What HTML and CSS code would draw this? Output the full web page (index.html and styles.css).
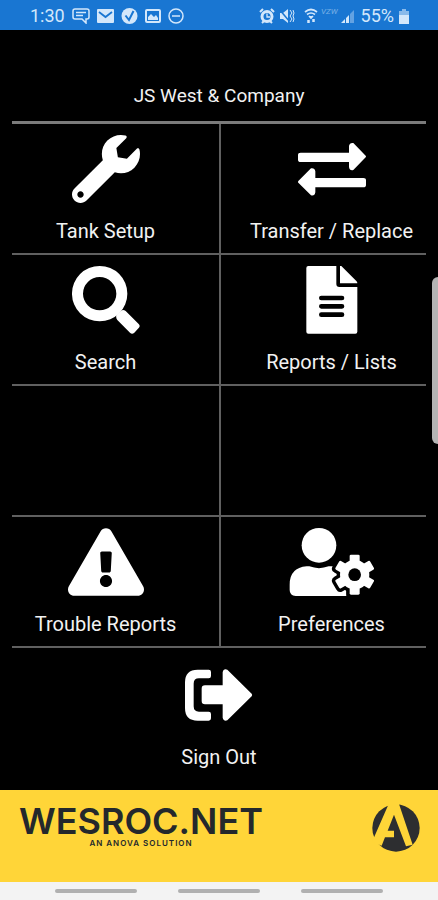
FILE: index.html
```
<!DOCTYPE html>
<html lang="en">
<head>
    <meta charset="UTF-8">
    <meta name="viewport" content="width=device-width, initial-scale=1">
    <title>Wesroc.net</title>
    <link rel="stylesheet" href="styles.css">
</head>
<body>
<div class="status-bar">
    <div class="status-left">
        <span>1:30</span>
        <svg width="18" height="16" viewBox="0 0 18 16" fill="none" stroke="currentColor" stroke-width="1.5"><path d="M3 1h12q2 0 2 2v6q0 2-2 2h-1v4l-4-4H3q-2 0-2-2V3q0-2 2-2zM4 4.500h10M4 7.500h7"/></svg>
        <svg width="17" height="16" viewBox="0 0 17 16"><rect y="1" width="17" height="14" rx="1" fill="currentColor"/><path d="M2 4l6.500 5L15 4" fill="none" stroke="#1976d2" stroke-width="1.800"/></svg>
        <svg width="17" height="16" viewBox="0 0 17 16"><circle cx="8.500" cy="8" r="8" fill="currentColor"/><path d="M4.500 7.500l3.500 4.500 4.500-9" fill="none" stroke="#1976d2" stroke-width="2"/></svg>
        <svg width="16" height="16" viewBox="0 0 16 16"><rect x="1" y="2" width="14" height="12" rx="1" fill="none" stroke="currentColor" stroke-width="2"/><path d="M3 12V9l3-3 3 3 2-2 2 3v2z" fill="currentColor"/></svg>
        <svg width="16" height="16" viewBox="0 0 16 16" fill="none" stroke="currentColor" stroke-width="1.500"><circle cx="8" cy="8" r="7"/><path d="M4 8h8"/></svg>
    </div>
    <div class="status-right">
        <svg width="16" height="16" viewBox="0 0 16 16" fill="none" stroke="currentColor"><circle cx="8" cy="8.500" r="5" stroke-width="3"/><path d="M1 4l3-3M15 4l-3-3M3 15l2-2M13 15l-2-2" stroke-width="2"/><path d="M8 5.500V9h3" stroke-width="1.300"/></svg>
        <svg width="17" height="16" viewBox="0 0 17 16"><path d="M2 5h3l5-4v14l-5-4H2z" fill="currentColor"/><path d="M1 1l11 13" stroke="#1976d2" stroke-width="1.500"/><path d="M12 2l2 3-2 3 2 3-2 3M15 2l1 3-1 3 1 3-1 3" fill="none" stroke="currentColor"/></svg>
        <svg class="wifi" width="14" height="16" viewBox="0 0 14 16" fill="none" stroke="currentColor" stroke-width="1.700"><path d="M1 4q6-5 12 0M3 6.500q4-3 8 0"/><path d="M5 8l2 2 2-2" fill="currentColor"/><path d="M4.500 15v-3M9.500 11v3" stroke-width="2.500"/></svg>
        <span class="carrier">VZW</span>
        <svg width="13" height="14" viewBox="0 0 13 14" fill="currentColor"><path d="M0 14l4-4v4zM5 14V9l3-3v8z"/><path d="M9 14V5l4-4v13z" opacity=".4"/></svg>
        <span class="percent">55%</span>
        <svg width="10" height="15" viewBox="0 0 10 15" fill="currentColor"><path d="M3 0h4v2h3v4H0V2h3z" opacity=".6"/><path d="M0 6h10v9H0z"/></svg>
    </div>
</div>

<main class="main">
    <h1 class="company">JS West &amp; Company</h1>
    <nav class="menu">
        <a class="item" href="#">
            <svg class="icon" width="68" height="68" viewBox="0 0 512 512"><path d="M507.730 109.100c-2.240-9.030-13.540-12.090-20.120-5.510l-74.360 74.360-67.880-11.310-11.310-67.880 74.360-74.360c6.620-6.620 3.430-17.900-5.660-20.160-47.380-11.740-99.550.910-136.580 37.930-39.640 39.640-50.550 97.100-34.050 147.200L18.740 402.760c-24.990 24.990-24.990 65.510 0 90.500 24.990 24.990 65.510 24.990 90.500 0l213.210-213.210c50.120 16.710 107.470 5.680 147.370-34.220 37.070-37.070 49.700-89.320 37.910-136.730zM64 472c-13.250 0-24-10.750-24-24 0-13.260 10.750-24 24-24s24 10.740 24 24c0 13.250-10.750 24-24 24z"/></svg>
            <span>Tank Setup</span>
        </a>
        <a class="item" href="#">
            <svg class="icon" width="68" height="68" viewBox="0 0 204 204"><path d="M8 53h145V33q2-11 13-9l37 38q2 3 0 5l-37 38q-11 3-13-9V81H8q-8 0-8-7V60q0-7 8-7zM196 129H52v-20q-2-11-13-9L1 138q-2 3 0 5l38 38q11 3 13-9v-15h144q8 0 8-7v-14q0-7-8-7z"/></svg>
            <span>Transfer / Replace</span>
        </a>
        <a class="item" href="#">
            <svg class="icon" width="68" height="68" viewBox="0 0 204 204"><path fill-rule="evenodd" d="M83 0a83 83 0 1 1 0 166a83 83 0 1 1 0-166zM83 33a50 50 0 1 0 0 100a50 50 0 1 0 0-100z"/><path d="M133 147l14-13q7-4 14 1l39 39q6 6 0 12l-13 14q-7 6-13 0l-38-38q-5-5-3-15z"/></svg>
            <span>Search</span>
        </a>
        <a class="item" href="#">
            <svg class="icon" width="52" height="68" viewBox="0 0 156 204"><path fill-rule="evenodd" d="M7 0h84v54q0 9 9 9h54v134q0 6-6 6H7q-6 0-6-6V6q0-6 6-6zM46 89q-7 0-7 7t7 7h62q7 0 7-7t-7-7zM46 114q-7 0-7 7t7 7h62q7 0 7-7t-7-7zM46 139q-7 0-7 7t7 7h62q7 0 7-7t-7-7z"/><path d="M102 0h4l45 45q3 3 3 7h-52z"/></svg>
            <span>Reports / Lists</span>
        </a>
        <div class="item"></div>
        <div class="item"></div>
        <a class="item" href="#">
            <svg class="icon" width="76" height="68" viewBox="0 0 576 512"><path d="M569.517 440.013C587.975 472.007 564.806 512 527.940 512H48.054c-36.937 0-59.999-40.055-41.577-71.987L246.423 23.985c18.467-32.009 64.720-31.951 83.154 0l239.940 416.028zM288 354c-25.405 0-46 20.595-46 46s20.595 46 46 46 46-20.595 46-46-20.595-46-46-46zm-43.673-165.346l7.418 136c.347 6.364 5.609 11.346 11.982 11.346h48.546c6.373 0 11.635-4.982 11.982-11.346l7.418-136c.375-6.874-5.098-12.654-11.982-12.654h-63.383c-6.884 0-12.356 5.780-11.981 12.654z"/></svg>
            <span>Trouble Reports</span>
        </a>
        <a class="item" href="#">
            <svg class="icon" width="85" height="68" viewBox="0 0 255 204">
                <circle cx="90" cy="52" r="52"/>
                <path d="M2 186v-16q0-51 51-55h8q29 11 58 0h8q20 1 35 12l10 61v16H20q-18-1-18-18z"/>
                <g class="gear-gap">
                    <circle cx="197" cy="140" r="44"/>
                    <path id="teeth" d="M182 84q0-4 4-4h22q4 0 4 4v112q0 4-4 4h-22q-4 0-4-4z"/>
                    <use href="#teeth" transform="rotate(60 197 140)"/>
                    <use href="#teeth" transform="rotate(120 197 140)"/>
                </g>
                <circle cx="197" cy="140" r="44"/>
                <use href="#teeth"/>
                <use href="#teeth" transform="rotate(60 197 140)"/>
                <use href="#teeth" transform="rotate(120 197 140)"/>
                <circle cx="197" cy="140" r="19" fill="#000"/>
            </svg>
            <span>Preferences</span>
        </a>
        <a class="item sign-out" href="#">
            <svg class="icon" width="68" height="68" viewBox="0 0 204 204"><path d="M38 26h33q7 0 7 7v12q0 7-7 7H42q-16 0-16 16v68q0 16 16 16h29q7 0 7 7v13q0 7-7 7H38q-38 0-38-38V64q0-38 38-38zM60 73h53V34q2-12 14-8l73 72q3 4 0 8l-73 72q-11 4-14-8v-40H60q-10 0-10-10V83q0-10 10-10z"/></svg>
            <span>Sign Out</span>
        </a>
    </nav>
    <div class="edge-handle"></div>
</main>

<footer class="brand">
    <div class="brand-text">
        <strong>WESROC.NET</strong>
        <small>AN ANOVA SOLUTION</small>
    </div>
    <svg width="48" height="48" viewBox="0 0 144 144"><circle cx="72" cy="72" r="71" fill="#2d2e30"/><path d="M50 0h31l41 122-20 5-36-95-19 48h19v20H39l-10 25-29-11z" fill="#ffd538"/></svg>
</footer>

<div class="nav-bar"><i></i><i></i><i></i></div>
</body>
</html>
```
FILE: styles.css
```
*{margin: 0;padding: 0;box-sizing: border-box;}
body{min-height: 100vh;display: flex;flex-direction: column;background: #000;color: #f2f2f2;font-family: Roboto, "Liberation Sans", sans-serif;font-size: 20px;line-height: 24px;}
a{color: inherit;text-decoration: none;}
svg{flex: none;}

.status-bar{height: 30px;padding: 2px 29px 0 30px;display: flex;justify-content: space-between;background: #1976d2;color: #d3e7fb;font-size: 18px;}
.status-left{display: flex;align-items: center;gap: 7px;}
.status-right{display: flex;align-items: center;gap: 3px;}
.wifi{margin-left: 6px;}
.carrier{font-size: 8px;font-style: italic;opacity: 0.5;align-self: flex-start;line-height: 20px;}
.percent{margin: 0 2px 0 4px;}

.main{flex: 1;position: relative;padding: 0 12px;}
.company{height: 91px;padding-top: 54px;text-align: center;font-size: 19px;font-weight: 400;}
.menu{display: grid;grid-template-columns: 1fr 1fr;grid-auto-rows: 131px;border-top: 3px solid #7b7b7b;}
.item{display: flex;flex-direction: column;align-items: center;gap: 16px;padding: 11px 20px 0 0;border-bottom: 2px solid #606060;}
.item:nth-child(even){padding: 11px 0 0 16px;border-left: 2px solid #606060;}
.item.sign-out{grid-column: 1 / 3;padding: 13px 0 0;border: 0;}
.icon{fill: #fff;}
.gear-gap{fill: #000;stroke: #000;stroke-width: 20px;}
.edge-handle{position: absolute;right: 0;top: 247px;width: 6px;height: 167px;background: #b4b4b4;border-radius: 6px 0 0 6px;}

.brand{height: 92px;padding: 14px 18px 0 19px;display: flex;justify-content: space-between;align-items: flex-start;background: #ffd538;color: #24282c;font-family: Inter, "Liberation Sans", sans-serif;}
.brand-text{display: flex;flex-direction: column;align-items: center;}
.brand-text strong{font-size: 36px;font-weight: 600;line-height: 34px;}
.brand-text small{font-size: 8px;font-weight: 600;line-height: 10px;letter-spacing: 1px;}

.nav-bar{height: 18px;padding: 0 55px;display: flex;justify-content: space-between;align-items: center;background: #f3f3f3;}
.nav-bar i{width: 25%;height: 4px;border-radius: 2px;background: #b0b0b0;}
```
